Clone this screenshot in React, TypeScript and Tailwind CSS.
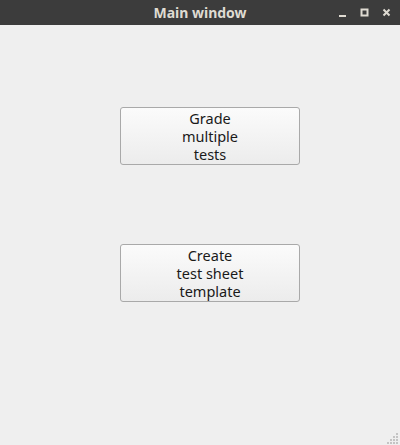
export default function App() {
  return (
    <div className="w-[400px] h-[445px] flex flex-col bg-[#efefef] font-['Noto_Sans',sans-serif] overflow-hidden">
      <div className="relative h-[25px] shrink-0 bg-[#3c3c3c] flex items-center justify-center">
        <span className="text-[14px] font-bold text-[#dfdbd2] leading-none">Main window</span>
        <div className="absolute right-[9px] top-0 h-[25px] flex items-center gap-[13px]">
          <svg width="9" height="9" viewBox="0 0 9 9">
            <rect x="1" y="7" width="7" height="2" fill="#dfdbd2" />
          </svg>
          <svg width="9" height="9" viewBox="0 0 9 9">
            <rect x="1.5" y="1.5" width="6" height="6" fill="none" stroke="#dfdbd2" strokeWidth="2" />
          </svg>
          <svg width="9" height="9" viewBox="0 0 9 9">
            <path d="M1.5 1.5L7.5 7.5M7.5 1.5L1.5 7.5" stroke="#dfdbd2" strokeWidth="2" />
          </svg>
        </div>
      </div>

      <div className="relative flex-1 flex flex-col items-center pl-[20px] pt-[82px] gap-[79px]">
        <button className="w-[180px] h-[58px] rounded-[3px] border border-[#a9a9a9] bg-gradient-to-b from-[#fbfbfb] to-[#ececec] text-[14.5px] leading-[18px] text-[#1a1a1a]">
          Grade
          <br />
          multiple
          <br />
          tests
        </button>
        <button className="w-[180px] h-[58px] rounded-[3px] border border-[#a9a9a9] bg-gradient-to-b from-[#fbfbfb] to-[#ececec] text-[14.5px] leading-[18px] text-[#1a1a1a]">
          Create
          <br />
          test sheet
          <br />
          template
        </button>

        <svg className="absolute right-[1px] bottom-[1px]" width="12" height="12" viewBox="0 0 12 12">
          <g fill="#c4c4c4">
            <rect x="9" y="1" width="2" height="2" />
            <rect x="6" y="4" width="2" height="2" />
            <rect x="9" y="4" width="2" height="2" />
            <rect x="3" y="7" width="2" height="2" />
            <rect x="6" y="7" width="2" height="2" />
            <rect x="9" y="7" width="2" height="2" />
            <rect x="0" y="10" width="2" height="2" />
            <rect x="3" y="10" width="2" height="2" />
            <rect x="6" y="10" width="2" height="2" />
            <rect x="9" y="10" width="2" height="2" />
          </g>
        </svg>
      </div>
    </div>
  );
}
